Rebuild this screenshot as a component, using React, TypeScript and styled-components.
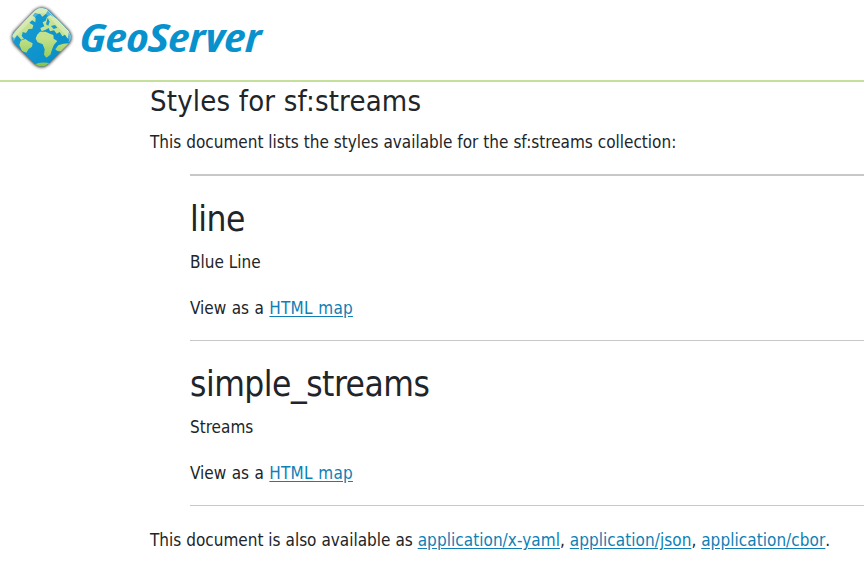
import React from "react";
import styled, { createGlobalStyle } from "styled-components";

const GlobalStyle = createGlobalStyle`
  *, *::before, *::after { box-sizing: border-box; }
  html, body { margin: 0; padding: 0; background: #fff; overflow: hidden; }
  body {
    font-family: Tahoma, "DejaVu Sans Condensed", "DejaVu Sans", sans-serif;
    font-stretch: condensed;
    font-size: 17px;
    line-height: 24px;
    color: #212529;
  }
`;

const Header = styled.header`
  height: 82px;
  border-bottom: 2px solid #c5e09b;
`;

const Logo = styled.svg`
  display: block;
`;

const Content = styled.main`
  padding: 1px 0 0 150px;
  white-space: nowrap;
`;

const Title = styled.h1`
  margin: 0;
  font-size: 29px;
  font-weight: 400;
  line-height: 36px;
  letter-spacing: 0.2px;
`;

const Text = styled.p<{ $gap: number; $wordSpacing?: number }>`
  margin: ${(p) => p.$gap}px 0 0;
  word-spacing: ${(p) => p.$wordSpacing ?? 0.1}px;
`;

const StyleList = styled.ul`
  margin: 20px 0 0;
  padding: 0 0 0 40px;
  list-style: none;
`;

const StyleItem = styled.li`
  height: 165px;
  padding-top: 22px;
  border-top: 1px solid #c8c8c8;

  &:first-child {
    height: 166px;
    border-top-width: 2px;
  }
  &:last-child {
    height: 166px;
    border-bottom: 1px solid #c8c8c8;
  }
`;

const StyleName = styled.h2`
  margin: 0;
  font-size: 35px;
  font-weight: 400;
  line-height: 42px;
  letter-spacing: -0.5px;
`;

const Link = styled.a<{ $spacing?: number }>`
  color: #0f7fb5;
  text-decoration: underline;
  text-underline-offset: 2px;
  letter-spacing: ${(p) => p.$spacing ?? 0.05}px;
`;

function GeoServerLogo() {
  return (
    <Logo width="270" height="80" viewBox="0 0 270 80" role="img" aria-label="GeoServer">
      <defs>
        <linearGradient id="ocean" x1="0" y1="0" x2="1" y2="1">
          <stop offset="0" stopColor="#1c9fd6" />
          <stop offset="1" stopColor="#058bc6" />
        </linearGradient>
        <linearGradient id="land" gradientUnits="userSpaceOnUse" x1="0" y1="25" x2="0" y2="205">
          <stop offset="0" stopColor="#c9e39a" />
          <stop offset="0.5" stopColor="#c3e08a" />
          <stop offset="1" stopColor="#7fc241" />
        </linearGradient>
        <filter id="shadow" x="-20%" y="-20%" width="140%" height="140%">
          <feGaussianBlur stdDeviation="5" />
        </filter>
        <clipPath id="tile">
          <path d="M104 32Q125 14 147 32L204 90Q222 111 205 131L147 190Q125 209 104 191L45 133Q29 114 43 95Z" />
        </clipPath>
      </defs>
      <g transform="scale(.33333)">
        <path d="M103 31Q125 13 148 31L206 89Q224 112 208 132L148 193Q125 212 103 194L43 135Q27 114 42 94Z" fill="#222" opacity=".85" filter="url(#shadow)" />
        <g clipPath="url(#tile)">
          <rect x="25" y="12" width="200" height="200" fill="url(#ocean)" />
          <g fill="url(#land)">
            <path d="M35 108L78 56L119 15L124 33L118 42L105 38L98 47L107 54L106 67L96 61L88 68L100 76L97 86L86 87L78 99L68 96L65 108L72 117L64 119L51 105L43 115Z" />
            <path d="M62 122L76 117L86 124L98 130L96 140L86 147L79 158L66 153L58 135Z" />
            <path d="M122 24L145 28L137 42L127 50L119 40Z" />
            <path d="M128 67L137 62L141 51L151 45L160 50L173 58L207 94L203 116L195 104L187 109L179 96L170 101L162 91L150 94L146 84L137 89L125 94L121 84L133 79Z" />
            <path d="M111 105L120 95L137 95L150 101L160 105L161 116L172 123L162 134L157 146L151 164L139 173L132 164L134 148L128 133L113 127L107 116Z" />
            <path d="M166 148L175 136L190 131L207 130L204 145L187 155L172 153Z" />
            <path d="M101 194Q126 182 153 191L126 211Z" />
          </g>
          <path d="M143 53L149 65L145 77L138 73ZM153 78L165 75L172 83L161 87Z" fill="#159bd1" />
          <path d="M41 98L104 32Q125 14 147 32L204 90Q219 107 209 122L197 105L139 43Q125 34 112 44L56 100L41 124Q31 108 41 98Z" fill="#fff" opacity=".28" />
        </g>
        <path d="M44 96L105 34Q125 17 145 34L203 92Q218 110 206 126" fill="none" stroke="#e2f2ef" strokeWidth="3" opacity=".45" />
      </g>
      <text x="80" y="52" fontFamily="Open Sans" fontWeight="700" fontStyle="italic" fontSize="39" fill="#0892cd" textLength="181" lengthAdjust="spacingAndGlyphs">GeoServer</text>
    </Logo>
  );
}

const styles = [
  { name: "line", title: "Blue Line" },
  { name: "simple_streams", title: "Streams" },
];

export default function App() {
  return (
    <>
      <GlobalStyle />
      <Header><GeoServerLogo /></Header>
      <Content>
        <Title>Styles for sf:streams</Title>
        <Text $gap={11}>This document lists the styles available for the sf:streams collection:</Text>
        <StyleList>
          {styles.map((s) => (
            <StyleItem key={s.name}>
              <StyleName>{s.name}</StyleName>
              <Text $gap={10}>{s.title}</Text>
              <Text $gap={22} $wordSpacing={0.6}>
                View as a <Link href="#" $spacing={0.2}>HTML map</Link>
              </Text>
            </StyleItem>
          ))}
        </StyleList>
        <Text $gap={22}>
          This document is also available as <Link href="#">application/x-yaml</Link>,{" "}
          <Link href="#">application/json</Link>, <Link href="#">application/cbor</Link>.
        </Text>
      </Content>
    </>
  );
}
